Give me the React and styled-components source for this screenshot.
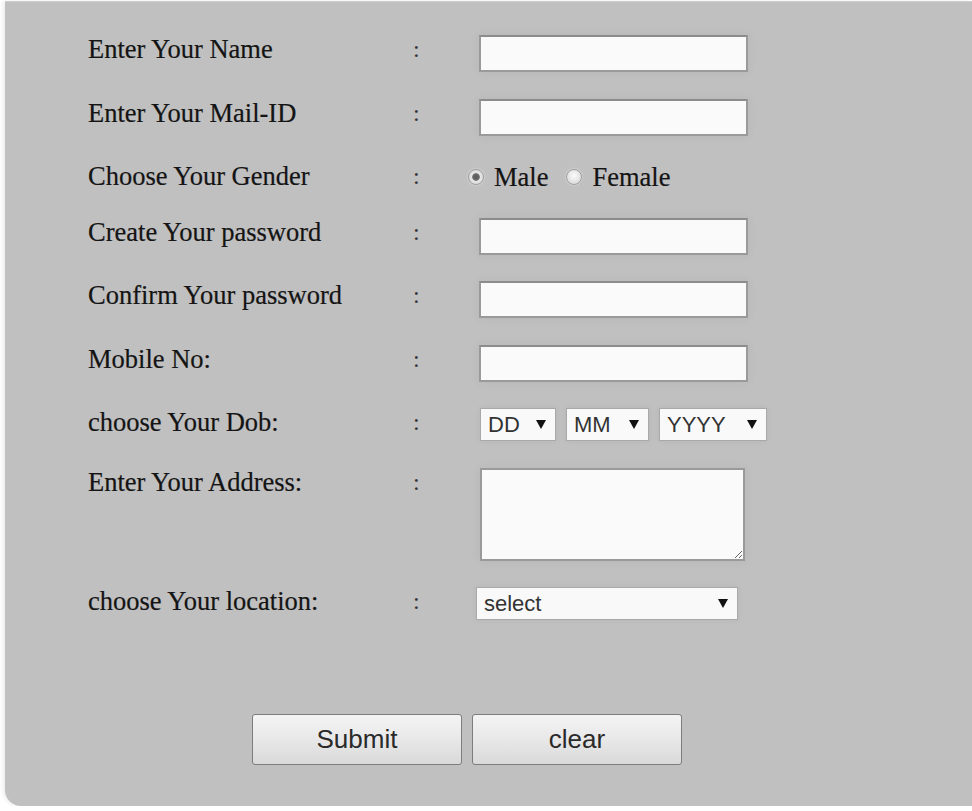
import React, { useState } from "react";
import styled, { createGlobalStyle } from "styled-components";

const GlobalStyle = createGlobalStyle`
  html, body {
    margin: 0;
    padding: 0;
    background: #ffffff;
    overflow: hidden;
  }
  body {
    font-family: "Liberation Serif", "Times New Roman", serif;
  }
`;

const days = Array.from({ length: 31 }, (_, i) => i + 1);
const months = Array.from({ length: 12 }, (_, i) => i + 1);
const years = Array.from({ length: 60 }, (_, i) => 2014 - i);

function App() {
  const [gender, setGender] = useState("male");

  return (
    <>
      <GlobalStyle />
      <Panel>
        <FormGrid>
          <Label>Enter Your Name</Label>
          <Colon>:</Colon>
          <TextInput type="text" />

          <Label>Enter Your Mail-ID</Label>
          <Colon>:</Colon>
          <TextInput type="text" />

          <Label>Choose Your Gender</Label>
          <Colon>:</Colon>
          <RadioGroup>
            <RadioLabel>
              <Radio
                type="radio"
                name="gender"
                checked={gender === "male"}
                onChange={() => setGender("male")}
              />
              Male
            </RadioLabel>
            <RadioLabel>
              <Radio
                type="radio"
                name="gender"
                checked={gender === "female"}
                onChange={() => setGender("female")}
              />
              Female
            </RadioLabel>
          </RadioGroup>

          <Label>Create Your password</Label>
          <Colon>:</Colon>
          <TextInput type="password" />

          <Label>Confirm Your password</Label>
          <Colon>:</Colon>
          <TextInput type="password" />

          <Label>Mobile No:</Label>
          <Colon>:</Colon>
          <TextInput type="text" />

          <Label>choose Your Dob:</Label>
          <Colon>:</Colon>
          <DobRow>
            <SelectBox w="76px">
              <Select defaultValue="">
                <option value="">DD</option>
                {days.map((d) => (
                  <option key={d}>{d}</option>
                ))}
              </Select>
              <Arrow />
            </SelectBox>
            <SelectBox w="83px">
              <Select defaultValue="">
                <option value="">MM</option>
                {months.map((m) => (
                  <option key={m}>{m}</option>
                ))}
              </Select>
              <Arrow />
            </SelectBox>
            <SelectBox w="108px">
              <Select defaultValue="">
                <option value="">YYYY</option>
                {years.map((y) => (
                  <option key={y}>{y}</option>
                ))}
              </Select>
              <Arrow />
            </SelectBox>
          </DobRow>

          <Label>Enter Your Address:</Label>
          <Colon>:</Colon>
          <Address />

          <Label>choose Your location:</Label>
          <Colon>:</Colon>
          <SelectBox w="262px" shift="-3px">
            <Select defaultValue="">
              <option value="">select</option>
              <option>Chennai</option>
              <option>Bangalore</option>
              <option>Mumbai</option>
              <option>Delhi</option>
            </Select>
            <Arrow />
          </SelectBox>
        </FormGrid>

        <ButtonRow>
          <Button type="submit">Submit</Button>
          <Button type="reset">clear</Button>
        </ButtonRow>
      </Panel>
    </>
  );
}

function Arrow() {
  return (
    <ArrowIcon viewBox="0 0 10 9" aria-hidden="true">
      <path d="M0 0 H10 L5 9 Z" fill="#111" />
    </ArrowIcon>
  );
}

export default App;

const Panel = styled.div`
  box-sizing: border-box;
  margin: 1px 0 0 5px;
  height: 805px;
  padding: 33px 0 0 83px;
  background: #c0c0c0;
  border-radius: 0 0 0 16px;
  border-top: 1px solid #cdcdcd;
  box-shadow: -2px 0 4px rgba(0, 0, 0, 0.08);
`;

const FormGrid = styled.div`
  display: grid;
  grid-template-columns: 324px 67px 1fr;
  row-gap: 26.5px;
  align-items: start;
`;

const Label = styled.div`
  font-size: 26.5px;
  line-height: 28px;
  color: #141414;
  -webkit-text-stroke: 0.2px #141414;
  white-space: nowrap;
`;

const Colon = styled.div`
  font-size: 24px;
  line-height: 28px;
  color: #333;
  padding-left: 1px;
`;

const TextInput = styled.input`
  box-sizing: border-box;
  width: 269px;
  height: 37px;
  margin: 0;
  padding: 4px 6px;
  border: 2px solid #9a9a9a;
  border-top-color: #8c8c8c;
  background: #fafafa;
  box-shadow: 0 0 10px rgba(0, 0, 0, 0.06);
  font-size: 18px;
  outline: none;
`;

const RadioGroup = styled.div`
  display: flex;
  align-items: center;
  gap: 18px;
  margin-left: -11px;
  height: 28px;
  margin-top: 1px;
`;

const RadioLabel = styled.label`
  display: flex;
  align-items: center;
  gap: 10px;
  font-size: 26.5px;
  line-height: 28px;
  color: #141414;
  -webkit-text-stroke: 0.2px #141414;
`;

const Radio = styled.input`
  appearance: none;
  box-sizing: border-box;
  width: 16px;
  height: 16px;
  margin: 0;
  border-radius: 50%;
  border: 1px solid #a0a0a0;
  background: radial-gradient(circle at 50% 40%, #fbfbfb 0%, #dedede 70%, #cfcfcf 100%);
  box-shadow: 0 0 2px rgba(255, 255, 255, 0.7);

  &:checked {
    background: radial-gradient(circle, #5a5a5a 0%, #6b6b6b 34%, #e6e6e6 42%, #d2d2d2 100%);
  }
`;

const DobRow = styled.div`
  display: flex;
  gap: 10px;
  margin-left: 1px;
`;

const SelectBox = styled.div`
  box-sizing: border-box;
  display: flex;
  align-items: center;
  width: ${(p) => p.w};
  height: 33px;
  margin-left: ${(p) => p.shift || "0"};
  padding: 0 9px 0 0;
  border: 1px solid #a9a9a9;
  background: #f9f9f9;
  box-shadow: 0 0 6px rgba(0, 0, 0, 0.06);
`;

const Select = styled.select`
  appearance: none;
  flex: 1;
  min-width: 0;
  height: 100%;
  margin: 0;
  padding: 0 0 0 7px;
  border: none;
  background: transparent;
  font-family: "Liberation Sans", Arial, sans-serif;
  font-size: 22px;
  color: #333;
  outline: none;
`;

const ArrowIcon = styled.svg`
  width: 10px;
  height: 9px;
  flex: none;
  pointer-events: none;
`;

const Address = styled.textarea`
  box-sizing: border-box;
  width: 265px;
  height: 93px;
  margin: 0 0 0 1px;
  padding: 4px;
  border: 2px solid #9a9a9a;
  background: #fafafa;
  box-shadow: 0 0 10px rgba(0, 0, 0, 0.06);
  outline: none;
`;

const ButtonRow = styled.div`
  display: flex;
  gap: 10px;
  margin: 94px 0 0 164px;
`;

const Button = styled.button`
  box-sizing: border-box;
  width: 210px;
  height: 51px;
  border: 1px solid #7d7d7d;
  border-radius: 3px;
  background: linear-gradient(#f4f4f4, #e8e8e8 50%, #d9d9d9);
  font-family: "Liberation Sans", Arial, sans-serif;
  font-size: 26px;
  color: #2a2a2a;
  cursor: pointer;
`;
